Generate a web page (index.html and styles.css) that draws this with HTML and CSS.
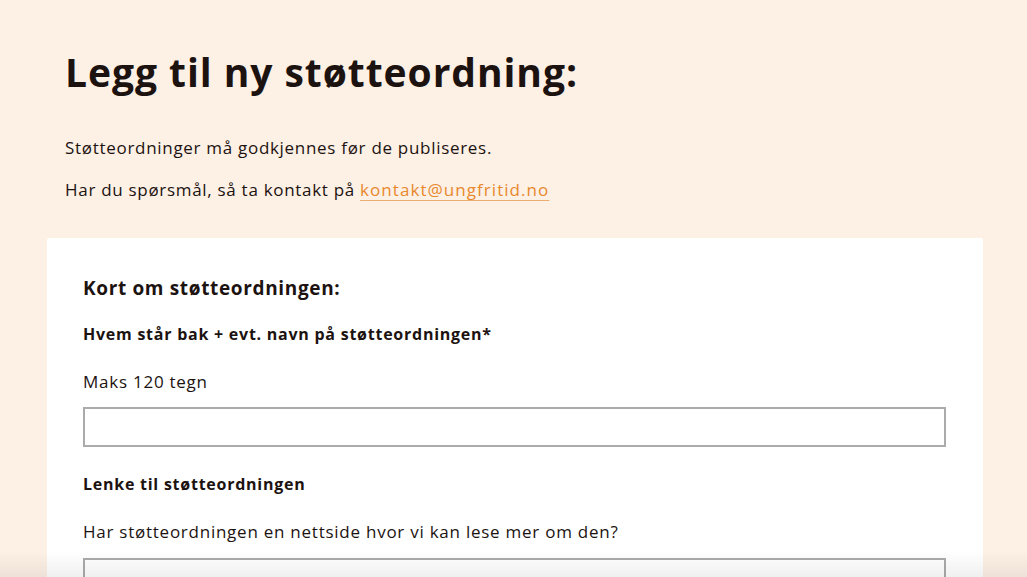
FILE: index.html
```html
<!DOCTYPE html>
<html lang="no">
<head>
<meta charset="utf-8">
<title>Legg til ny støtteordning</title>
<link rel="stylesheet" href="styles.css">
</head>
<body>
<main class="page">
  <header class="intro">
    <h1 class="title">Legg til ny støtteordning:</h1>
    <p class="lead lead-first">Støtteordninger må godkjennes før de publiseres.</p>
    <p class="lead lead-second">Har du spørsmål, så ta kontakt på <a class="mail" href="#">kontakt@ungfritid.no</a></p>
  </header>
  <form class="card">
    <h2 class="section-title">Kort om støtteordningen:</h2>
    <label class="field-label" for="navn">Hvem står bak + evt. navn på støtteordningen*</label>
    <p class="hint hint-first">Maks 120 tegn</p>
    <input class="text-input" id="navn" type="text">
    <label class="field-label field-label-next" for="lenke">Lenke til støtteordningen</label>
    <p class="hint">Har støtteordningen en nettside hvor vi kan lese mer om den?</p>
    <input class="text-input input-last" id="lenke" type="text">
  </form>
</main>
<div class="bottom-shade"></div>
</body>
</html>
```

FILE: styles.css
```css
* { box-sizing: border-box; }
html, body { margin: 0; padding: 0; }
body {
  background: #fdf0e5;
  color: #1c1311;
  font-family: "Open Sans", Lato, sans-serif;
  overflow: hidden;
  height: 577px;
}
.page {
  padding: 49px 44px 0 47px;
}
.intro {
  padding-left: 18px;
}
.title {
  margin: 0;
  font-size: 39px;
  line-height: 46px;
  font-weight: 700;
  letter-spacing: 0.95px;
}
.lead {
  margin: 0;
  font-size: 17px;
  line-height: 26px;
  letter-spacing: 0.7px;
}
.lead-first { margin-top: 40px; }
.lead-second { margin-top: 16px; }
.mail {
  color: #e8892e;
  letter-spacing: 1.05px;
  text-decoration: underline;
  text-decoration-color: #ecad72;
  text-underline-offset: 4px;
  text-decoration-thickness: 1px;
}
.card {
  margin-top: 35px;
  background: #ffffff;
  padding: 37px 37px 40px 36px;
  display: flex;
  flex-direction: column;
  border-radius: 2px;
}
.section-title {
  margin: 0;
  font-size: 19px;
  line-height: 26px;
  font-weight: 700;
  letter-spacing: 0.65px;
}
.field-label {
  margin-top: 21px;
  font-size: 16px;
  line-height: 24px;
  font-weight: 700;
  letter-spacing: 0.75px;
}
.field-label-next { margin-top: 25px; }
.hint {
  margin: 23px 0 0;
  font-size: 17px;
  line-height: 26px;
  letter-spacing: 0.75px;
}
.text-input {
  margin-top: 12px;
  height: 40px;
  width: 100%;
  border: 2px solid #ababab;
  background: #fff;
  border-radius: 0;
  font: inherit;
}
.input-last { margin-top: 13px; }
.bottom-shade {
  position: fixed;
  left: 0;
  right: 0;
  bottom: 0;
  height: 26px;
  background: linear-gradient(to bottom, rgba(0,0,0,0), rgba(0,0,0,0.06));
  pointer-events: none;
}
```
